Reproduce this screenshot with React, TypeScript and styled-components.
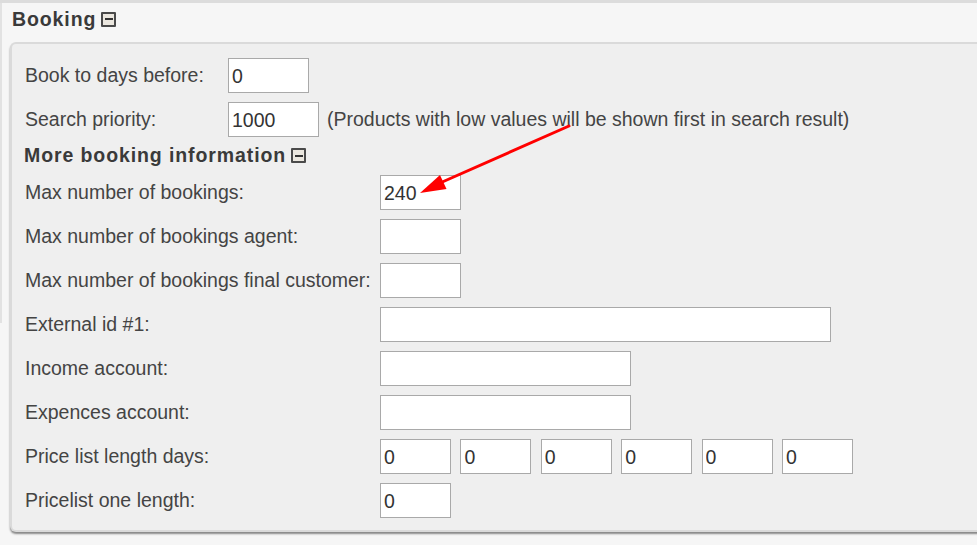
import React from "react";
import styled, { createGlobalStyle } from "styled-components";

const Global = createGlobalStyle`
  html, body { margin: 0; padding: 0; background: #f6f6f6; overflow: hidden; }
  body { font-family: "Liberation Sans", Arial, sans-serif; color: #404040; }
  * { box-sizing: border-box; }
`;

const Page = styled.div`
  position: relative;
  width: 977px;
  height: 545px;
  background: #f6f6f6;
  border-top: 3px solid #dcdcdc;
  &::before {
    content: "";
    position: absolute;
    left: 0;
    top: 0;
    width: 2px;
    height: 320px;
    background: #e2e2e2;
  }
`;

const HeaderBar = styled.div`
  display: flex;
  align-items: center;
  height: 39px;
  padding-left: 12px;
  padding-bottom: 8px;
  gap: 5px;
`;

const Title = styled.h2`
  margin: 0;
  font-size: 19.5px;
  font-weight: bold;
  letter-spacing: 0.9px;
  color: #3a3a3a;
  line-height: 20px;
`;

const MinusIcon = styled.span`
  display: inline-flex;
  align-items: center;
  justify-content: center;
  width: 15px;
  height: 15px;
  border: 2px solid #4a4a4a;
  background: #ebe7df;
  border-radius: 1px;
  margin-top: 1px;
  &::after {
    content: "";
    width: 8px;
    height: 2px;
    background: #333;
  }
`;

const Panel = styled.div`
  position: relative;
  margin-left: 10px;
  width: 1000px;
  height: 490px;
  background: #efefef;
  border: 2px solid #dadada;
  border-right: none;
  border-radius: 6px 0 0 6px;
  box-shadow: 0 2px 2px rgba(0, 0, 0, 0.45);
  padding: 14px 0 0 13px;
`;

const Form = styled.div<{ $labelWidth: number }>`
  display: grid;
  grid-template-columns: ${(p) => p.$labelWidth}px auto;
  row-gap: 9px;
  align-items: center;
  justify-content: start;
`;

const Label = styled.div`
  font-size: 19.5px;
  color: #444;
  line-height: 20px;
  white-space: nowrap;
  margin-top: -2px;
`;

const Fields = styled.div<{ $gap?: number }>`
  display: flex;
  align-items: center;
  gap: ${(p) => p.$gap ?? 9}px;
`;

const Input = styled.input<{ $w: number }>`
  width: ${(p) => p.$w}px;
  height: 35px;
  border: 1px solid #a9a9a9;
  background: #fff;
  padding: 2px 4px 0 3px;
  font-family: "Liberation Sans", Arial, sans-serif;
  font-size: 19.5px;
  color: #333;
  outline: none;
  margin: 0;
`;

const Hint = styled.span`
  font-size: 19.5px;
  color: #444;
  white-space: nowrap;
  margin-left: -1px;
`;

const SubHeader = styled.div`
  display: flex;
  align-items: center;
  gap: 5px;
  margin: 8px 0 10px -1px;
`;

const Arrow = styled.svg`
  position: absolute;
  left: 0;
  top: 0;
  pointer-events: none;
`;

export default function App() {
  return (
    <>
      <Global />
      <Page>
        <HeaderBar>
          <Title>Booking</Title>
          <MinusIcon />
        </HeaderBar>
        <Panel>
          <Form $labelWidth={203}>
            <Label>Book to days before:</Label>
            <Fields>
              <Input $w={81} defaultValue="0" />
            </Fields>
            <Label>Search priority:</Label>
            <Fields>
              <Input $w={91} defaultValue="1000" />
              <Hint>(Products with low values will be shown first in search result)</Hint>
            </Fields>
          </Form>
          <SubHeader>
            <Title>More booking information</Title>
            <MinusIcon />
          </SubHeader>
          <Form $labelWidth={355}>
            <Label>Max number of bookings:</Label>
            <Fields>
              <Input $w={81} defaultValue="240" />
            </Fields>
            <Label>Max number of bookings agent:</Label>
            <Fields>
              <Input $w={81} />
            </Fields>
            <Label>Max number of bookings final customer:</Label>
            <Fields>
              <Input $w={81} />
            </Fields>
            <Label>External id #1:</Label>
            <Fields>
              <Input $w={451} />
            </Fields>
            <Label>Income account:</Label>
            <Fields>
              <Input $w={251} />
            </Fields>
            <Label>Expences account:</Label>
            <Fields>
              <Input $w={251} />
            </Fields>
            <Label>Price list length days:</Label>
            <Fields $gap={9.4}>
              {[0, 1, 2, 3, 4, 5].map((i) => (
                <Input key={i} $w={71} defaultValue="0" />
              ))}
            </Fields>
            <Label>Pricelist one length:</Label>
            <Fields>
              <Input $w={71} defaultValue="0" />
            </Fields>
          </Form>
        </Panel>
        <Arrow width="977" height="545" viewBox="0 0 977 545">
          <line x1="569" y1="123" x2="440" y2="180" stroke="#ff0000" strokeWidth="3" strokeLinecap="round" />
          <polygon points="420,190 446.5,186 440,172" fill="#ff0000" />
        </Arrow>
      </Page>
    </>
  );
}
